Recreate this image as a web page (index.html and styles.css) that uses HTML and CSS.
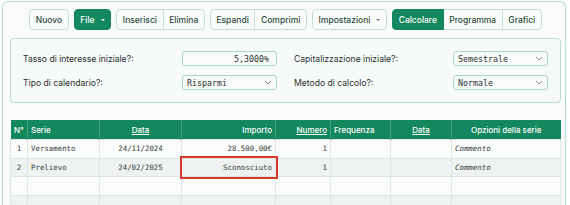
FILE: index.html
```html
<!DOCTYPE html>
<html lang="it">
<head>
<meta charset="utf-8">
<title>Calcolo</title>
<link rel="stylesheet" href="styles.css">
</head>
<body>
<div class="app">
  <div class="toolbar">
    <div class="group"><button class="btn">Nuovo</button></div>
    <div class="group"><button class="btn primary">File <span class="caret"></span></button></div>
    <div class="group"><button class="btn">Inserisci</button><button class="btn">Elimina</button></div>
    <div class="group"><button class="btn">Espandi</button><button class="btn">Comprimi</button></div>
    <div class="group"><button class="btn">Impostazioni <span class="caret"></span></button></div>
    <div class="group"><button class="btn primary">Calcolare</button><button class="btn">Programma</button><button class="btn">Grafici</button></div>
  </div>

  <div class="panel">
    <div class="field">
      <span class="label">Tasso di interesse iniziale?:</span>
      <div class="control input-like right">5,3000%</div>
    </div>
    <div class="field">
      <span class="label">Capitalizzazione iniziale?:</span>
      <div class="control select"><span>Semestrale</span><svg class="chev" viewBox="0 0 8 5" width="8" height="5"><path d="M1 1l3 3 3-3" fill="none" stroke="#7a8480" stroke-width="0.9"/></svg></div>
    </div>
    <div class="field">
      <span class="label">Tipo di calendario?:</span>
      <div class="control select"><span>Risparmi</span><svg class="chev" viewBox="0 0 8 5" width="8" height="5"><path d="M1 1l3 3 3-3" fill="none" stroke="#7a8480" stroke-width="0.9"/></svg></div>
    </div>
    <div class="field">
      <span class="label">Metodo di calcolo?:</span>
      <div class="control select"><span>Normale</span><svg class="chev" viewBox="0 0 8 5" width="8" height="5"><path d="M1 1l3 3 3-3" fill="none" stroke="#7a8480" stroke-width="0.9"/></svg></div>
    </div>
  </div>

  <table class="grid">
    <colgroup>
      <col class="c-n"><col class="c-serie"><col class="c-data"><col class="c-imp"><col class="c-num"><col class="c-freq"><col class="c-data2"><col class="c-opt">
    </colgroup>
    <thead>
      <tr>
        <th class="ctr">N°</th>
        <th class="lft">Serie</th>
        <th class="ctr"><u>Data</u></th>
        <th class="rgt">Importo</th>
        <th class="rgt"><u>Numero</u></th>
        <th class="lft">Frequenza</th>
        <th class="ctr"><u>Data</u></th>
        <th class="ctr">Opzioni della serie</th>
      </tr>
    </thead>
    <tbody>
      <tr>
        <td class="ctr">1</td>
        <td>Versamento</td>
        <td class="ctr">24/11/2024</td>
        <td class="rgt">28.500,00€</td>
        <td class="rgt">1</td>
        <td></td>
        <td></td>
        <td class="it">Commento</td>
      </tr>
      <tr class="alt">
        <td class="ctr">2</td>
        <td>Prelievo</td>
        <td class="ctr">24/02/2025</td>
        <td class="rgt flagged">Sconosciuto</td>
        <td class="rgt">1</td>
        <td></td>
        <td></td>
        <td class="it">Commento</td>
      </tr>
      <tr>
        <td></td><td></td><td></td><td></td><td></td><td></td><td></td><td></td>
      </tr>
      <tr class="alt">
        <td></td><td></td><td></td><td></td><td></td><td></td><td></td><td></td>
      </tr>
    </tbody>
  </table>
</div>
</body>
</html>
```

FILE: styles.css
```css
html, body {
  margin: 0;
  padding: 0;
  background: #ffffff;
  overflow: hidden;
}

body {
  font-family: Inter, "Noto Sans", "Liberation Sans", sans-serif;
  color: #2b2f2e;
}

.app {
  box-sizing: border-box;
  margin: 1px 4px 0 2px;
  height: 215px;
  padding: 7px 4px 0 7px;
  background: #f8fbfa;
  border: 1px solid #b3dfcf;
  border-bottom: none;
  border-radius: 6px 6px 0 0;
  box-shadow: 0 0 2px rgba(60, 120, 100, 0.12);
}

/* toolbar */
.toolbar {
  display: flex;
  justify-content: center;
  gap: 5px;
  height: 21px;
}

.group {
  display: flex;
}

.btn {
  box-sizing: border-box;
  height: 21px;
  margin: 0;
  padding: 0 5.6px;
  font-family: Inter, "Noto Sans", sans-serif;
  font-size: 8.5px;
  font-weight: 500;
  color: #2c4a40;
  background: #f9fcfb;
  border: 1px solid #c2e0d5;
  border-radius: 0;
  display: flex;
  align-items: center;
  gap: 6px;
}

.btn + .btn {
  margin-left: -1px;
}

.group .btn:first-child {
  border-top-left-radius: 4px;
  border-bottom-left-radius: 4px;
}

.group .btn:last-child {
  border-top-right-radius: 4px;
  border-bottom-right-radius: 4px;
}

.btn.primary {
  background: #13875d;
  border-color: #13875d;
  color: #ffffff;
  position: relative;
  z-index: 1;
}

.caret {
  width: 0;
  height: 0;
  border-left: 2px solid transparent;
  border-right: 2px solid transparent;
  border-top: 2.5px solid #6d7773;
}

.btn.primary .caret {
  border-top-color: #ffffff;
}

/* settings panel */
.panel {
  margin-top: 8px;
  padding: 12px 12px 12px;
  background: #f6faf9;
  border: 1px solid #b9ddd0;
  border-radius: 4px;
  display: grid;
  grid-template-columns: 1fr 1fr;
  column-gap: 17px;
  row-gap: 9px;
}

.field {
  display: flex;
  align-items: center;
  justify-content: space-between;
  height: 15px;
}

.label {
  font-size: 8.6px;
  color: #2b2f2e;
}

.control {
  box-sizing: border-box;
  width: 95px;
  height: 15px;
  background: #f8fbfa;
  border: 1px solid #a9d6c6;
  border-radius: 3px;
  font-family: "DejaVu Sans Mono", "Liberation Mono", monospace;
  font-size: 8.3px;
  color: #2d3230;
  display: flex;
  align-items: center;
  padding: 0 4px;
}

.control.right {
  justify-content: flex-end;
  padding-right: 7px;
}

.select {
  justify-content: space-between;
}

.chev {
  display: block;
}

/* table */
.grid {
  margin-top: 17px;
  width: 550px;
  table-layout: fixed;
  border-collapse: collapse;
}

.c-n { width: 17px; }
.c-serie { width: 72px; }
.c-data { width: 82px; }
.c-imp { width: 94px; }
.c-num { width: 55px; }
.c-freq { width: 60px; }
.c-data2 { width: 61px; }
.c-opt { width: 109px; }

.grid th {
  height: 19px;
  padding: 0 3px;
  background: #13875d;
  color: #ffffff;
  font-family: Inter, "Noto Sans", sans-serif;
  font-size: 8px;
  font-weight: 500;
  border-left: 1px solid #3fa07b;
  white-space: nowrap;
  overflow: hidden;
}

.grid th:first-child {
  border-left: none;
}

.grid th u {
  text-underline-offset: 1px;
}

.grid td {
  height: 17.5px;
  padding: 0 3px;
  font-family: "DejaVu Sans Mono", "Liberation Mono", monospace;
  font-size: 7.4px;
  color: #363b39;
  background: #fbfcfc;
  border: 1px solid #dfe6e3;
  white-space: nowrap;
  overflow: visible;
}

.grid tr.alt td {
  background: #eef3f1;
}

.lft { text-align: left; }
.ctr { text-align: center; }
.rgt { text-align: right; }

.grid td.it {
  font-style: italic;
}

.grid td.flagged {
  outline: 2px solid #d8372c;
  outline-offset: 0;
}
```
